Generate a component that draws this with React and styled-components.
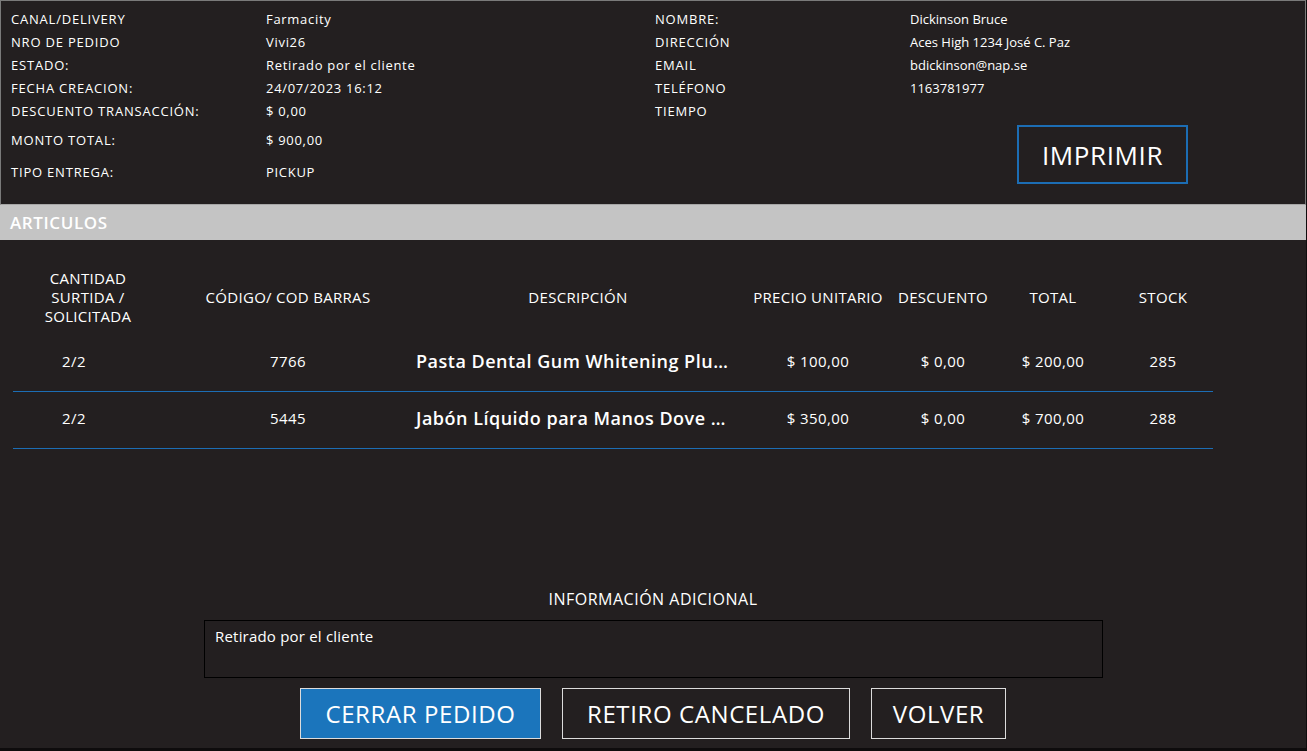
import styled, { createGlobalStyle } from "styled-components"

const GlobalStyle = createGlobalStyle`
    html, body {
        margin: 0;
        padding: 0;
        background-color: #0e0c0d;
    }
    * {
        box-sizing: border-box;
    }
`

const order = {
    left: [
        { label: "CANAL/DELIVERY", value: "Farmacity" },
        { label: "NRO DE PEDIDO", value: "Vivi26" },
        { label: "ESTADO:", value: "Retirado por el cliente" },
        { label: "FECHA CREACION:", value: "24/07/2023 16:12" },
        { label: "DESCUENTO TRANSACCIÓN:", value: "$ 0,00" },
        { label: "MONTO TOTAL:", value: "$ 900,00", space: 6 },
        { label: "TIPO ENTREGA:", value: "PICKUP", space: 9 },
    ],
    right: [
        { label: "NOMBRE:", value: "Dickinson Bruce" },
        { label: "DIRECCIÓN", value: "Aces High 1234 José C. Paz" },
        { label: "EMAIL", value: "bdickinson@nap.se" },
        { label: "TELÉFONO", value: "1163781977" },
        { label: "TIEMPO", value: "" },
    ],
}

const articulos = [
    { cantidad: "2/2", codigo: "7766", descripcion: "Pasta Dental Gum Whitening Plus 90g", precio: "$ 100,00", descuento: "$ 0,00", total: "$ 200,00", stock: "285" },
    { cantidad: "2/2", codigo: "5445", descripcion: "Jabón Líquido para Manos Dove Original 250ml", precio: "$ 350,00", descuento: "$ 0,00", total: "$ 700,00", stock: "288" },
]

export default function App(){
    return(
        <>
            <GlobalStyle/>
            <SCPage>
                <SCHeader>
                    <SCInfoColumn>
                        {order.left.map(item =>
                            <SCInfoRow key={item.label} $space={item.space} $wide>
                                <span>{item.label}</span>
                                <span>{item.value}</span>
                            </SCInfoRow>
                        )}
                    </SCInfoColumn>
                    <SCInfoColumn>
                        {order.right.map(item =>
                            <SCInfoRow key={item.label}>
                                <span>{item.label}</span>
                                <span>{item.value}</span>
                            </SCInfoRow>
                        )}
                        <SCPrintButton>IMPRIMIR</SCPrintButton>
                    </SCInfoColumn>
                </SCHeader>
                <SCSectionBar>ARTICULOS</SCSectionBar>
                <SCTable>
                    <SCHeadRow>
                        <span>CANTIDAD SURTIDA / SOLICITADA</span>
                        <span>CÓDIGO/ COD BARRAS</span>
                        <span>DESCRIPCIÓN</span>
                        <span>PRECIO UNITARIO</span>
                        <span>DESCUENTO</span>
                        <span>TOTAL</span>
                        <span>STOCK</span>
                    </SCHeadRow>
                    {articulos.map(art =>
                        <SCItemRow key={art.codigo}>
                            <span>{art.cantidad}</span>
                            <span>{art.codigo}</span>
                            <SCDescription>{art.descripcion}</SCDescription>
                            <span>{art.precio}</span>
                            <span>{art.descuento}</span>
                            <span>{art.total}</span>
                            <span>{art.stock}</span>
                        </SCItemRow>
                    )}
                </SCTable>
                <SCFooter>
                    <SCFooterTitle>INFORMACIÓN ADICIONAL</SCFooterTitle>
                    <SCNotes>Retirado por el cliente</SCNotes>
                    <SCActions>
                        <SCActionButton $primary $width={241}>CERRAR PEDIDO</SCActionButton>
                        <SCActionButton $width={288}>RETIRO CANCELADO</SCActionButton>
                        <SCActionButton $width={135}>VOLVER</SCActionButton>
                    </SCActions>
                </SCFooter>
            </SCPage>
        </>
    )
}

const SCPage = styled.div`
    width: 1306px;
    height: 748px;
    background-color: #231f20;
    color: white;
    font-family: 'Open Sans', 'Liberation Sans', sans-serif;
    font-weight: 500;
    display: flex;
    flex-direction: column;
`

const SCHeader = styled.div`
    height: 205px;
    border: 1px solid #7a7a7a;
    border-bottom-color: #a6a6a6;
    display: grid;
    grid-template-columns: 644px 1fr;
    padding: 6px 0 0 10px;
`

const SCInfoColumn = styled.div`
    display: flex;
    flex-direction: column;
`

const SCInfoRow = styled.div`
    display: grid;
    grid-template-columns: 255px 1fr;
    height: 23px;
    align-items: center;
    margin-top: ${props => props.$space || 0}px;
    font-size: 13px;

    span:first-child{
        letter-spacing: ${props => props.$wide ? "0.8px" : "0.8px"};
    }
    span:last-child{
        letter-spacing: ${props => props.$wide ? "0.7px" : "0"};
    }
`

const SCPrintButton = styled.button`
    width: 171px;
    height: 59px;
    margin: 3px 0 0 362px;
    background-color: transparent;
    border: 2px solid #1c6db4;
    color: white;
    font-family: 'Open Sans', 'Liberation Sans', sans-serif;
    font-weight: 500;
    font-size: 26px;
    letter-spacing: 0.6px;
    padding: 0;
`

const SCSectionBar = styled.div`
    height: 35px;
    background-color: #c4c4c4;
    color: white;
    font-size: 17px;
    font-weight: 600;
    letter-spacing: 0.6px;
    padding-left: 10px;
    display: flex;
    align-items: center;
`

const SCTable = styled.div`
    width: 1200px;
    margin: 21px 0 0 13px;
`

const columns = "150px 250px 330px 150px 100px 120px 100px"

const SCHeadRow = styled.div`
    display: grid;
    grid-template-columns: ${columns};
    height: 72px;
    margin-bottom: 2px;
    align-items: center;
    font-size: 15px;
    line-height: 19px;
    text-align: center;
    letter-spacing: 0.3px;

    span:first-child{
        padding: 0 26px;
    }
`

const SCItemRow = styled.div`
    display: grid;
    grid-template-columns: ${columns};
    height: 57px;
    align-items: center;
    padding-bottom: 4px;
    border-bottom: 1px solid #1c6db4;
    font-size: 15px;
    text-align: center;
    letter-spacing: 0.4px;

    span:first-child{
        padding-right: 28px;
    }
`

const SCDescription = styled.span`
    text-align: left;
    padding: 0 8px 0 3px;
    font-size: 18px;
    font-weight: 600;
    letter-spacing: 0.5px;
    white-space: nowrap;
    overflow: hidden;
    text-overflow: ellipsis;
`

const SCFooter = styled.div`
    margin-top: auto;
    padding-bottom: 9px;
    display: flex;
    flex-direction: column;
    align-items: center;
`

const SCFooterTitle = styled.p`
    margin: 0 0 10px 0;
    font-size: 16px;
    letter-spacing: 0.5px;
`

const SCNotes = styled.div`
    width: 899px;
    height: 58px;
    border: 1px solid #000;
    padding: 5px 10px;
    font-size: 15px;
    letter-spacing: 0.2px;
    margin-left: 1px;
`

const SCActions = styled.div`
    display: flex;
    gap: 21px;
    margin-top: 10px;
`

const SCActionButton = styled.button`
    width: ${props => props.$width}px;
    height: 51px;
    padding: 0;
    border: 1px solid #dcdcdc;
    background-color: ${props => props.$primary ? "#1b75bc" : "transparent"};
    color: white;
    font-family: 'Open Sans', 'Liberation Sans', sans-serif;
    font-weight: 500;
    font-size: 24px;
    letter-spacing: 0.6px;
`
